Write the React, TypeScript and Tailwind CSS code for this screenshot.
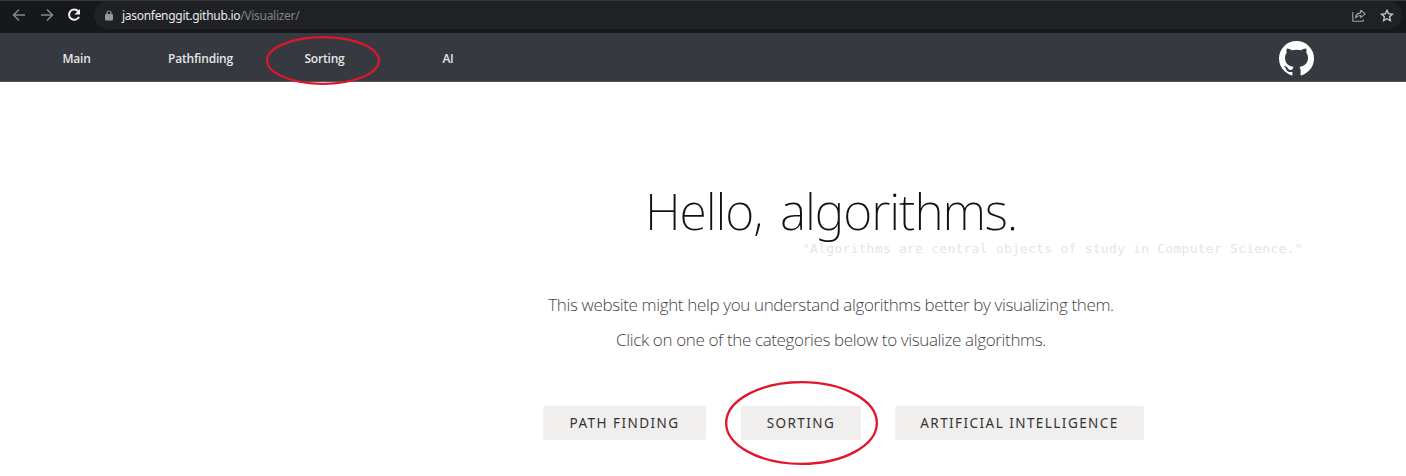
import React from "react";

const noWrap = "whitespace-nowrap";

function BrowserBar() {
  return (
    <div className="flex h-[33px] items-start border-t border-[#34363a] bg-[#16181c] text-[12px]">
      <div className="flex h-[28px] w-[94px] shrink-0 items-center pl-3">
        <svg width="14" height="14" viewBox="0 0 14 14" fill="none" stroke="#85878a" strokeWidth="1.5">
          <path d="M13 7H1.8M7 1.5 1.5 7 7 12.5" />
        </svg>
        <svg className="ml-[14px]" width="14" height="14" viewBox="0 0 14 14" fill="none" stroke="#85878a" strokeWidth="1.5">
          <path d="M1 7h11.2M7 1.5 12.5 7 7 12.5" />
        </svg>
        <svg className="ml-[13px]" width="14" height="14" viewBox="0 0 14 14">
          <path d="M11.3 3.3A5.2 5.2 0 1 0 12 8.8" fill="none" stroke="#f1f1f1" strokeWidth="2" />
          <path d="M13 1v5.6H7.4z" fill="#f1f1f1" />
        </svg>
      </div>
      <div className="mr-1 flex h-[28px] flex-1 items-center rounded-full bg-[#202124] pl-[11px] pr-[8px]">
        <svg width="8" height="11" viewBox="0 0 8 11">
          <path d="M2 5V3a2 2 0 0 1 4 0v2" fill="none" stroke="#94979b" strokeWidth="1.2" />
          <rect x="0" y="4" width="8" height="6.6" rx="1" fill="#94979b" />
        </svg>
        <span className={`ml-[9px] flex-1 pt-px font-['Noto_Sans',sans-serif] text-[12px] tracking-[-0.29px] text-[#808286] ${noWrap}`}>
          <span className="text-[#e8eaed]">jasonfenggit.github.io</span>/Visualizer/
        </span>
        <svg width="14" height="13" viewBox="0 0 14 13" fill="none" stroke="#a0a2a5" strokeWidth="1.1">
          <path d="M.8 3v9.2h10.4v-1.8" />
          <path d="M3.5 8.9C3.8 5.7 5.5 4.2 8.7 3.9V1.3L13.2 4.9 8.7 8.6V6.5C6.3 6.4 4.8 7.3 3.5 8.9Z" strokeLinejoin="round" />
        </svg>
        <svg className="ml-[14px]" width="14" height="13" viewBox="0 0 14 13" fill="none" stroke="#c3c5c8" strokeWidth="1.4">
          <path d="m7 1.3 1.6 3.5 3.9.4-2.9 2.6.8 3.8L7 9.7l-3.4 1.9.8-3.8-2.9-2.6 3.9-.4Z" />
        </svg>
      </div>
    </div>
  );
}

function Circled({ className, width, height, stroke }: { className: string; width: number; height: number; stroke: number }) {
  return (
    <svg className={`pointer-events-none absolute z-10 ${className}`} width={width} height={height} viewBox={`0 0 ${width} ${height}`}>
      <ellipse cx={width / 2} cy={height / 2} rx={(width - stroke) / 2} ry={(height - stroke) / 2} fill="none" stroke="#e1152c" strokeWidth={stroke} />
    </svg>
  );
}

function NavBar() {
  return (
    <nav className="flex h-[49px] items-center border-b border-[#54585c] bg-[#363a40] pl-[14px] pr-[92px] pt-[2px] font-['Open_Sans',sans-serif] text-[12px] font-semibold tracking-[-0.2px] text-[#e4e5e6]">
      <a className="w-[125px] pt-px text-center">Main</a>
      <a className="w-[123px] pt-px text-center">Pathfinding</a>
      <a className="relative w-[125px] pt-px text-center">
        Sorting
        <Circled className="left-[4px] top-[-13px]" width={114} height={49} stroke={2.2} />
      </a>
      <a className="w-[122px] pt-px text-center">AI</a>
      <svg className="ml-auto" width="35" height="35" viewBox="0 0 35 35">
        <circle cx="17.5" cy="17.5" r="17.5" fill="#fff" />
        <path
          d="M13.4 35v-4.1c-4.7.9-5.9-1.5-6.5-3.1-.4-.9-1.2-1.8-2.1-2.5 2.8-.7 3.8 1.8 4.6 2.7 1.2 1.3 2.8 1.2 4.1.6.1-1.3.6-2.2 1.2-2.7C9.8 25.3 6 22.7 6 16.6c0-2 .6-3.5 1.8-4.8-.4-1-.6-2.7.1-4.3 1.7-.1 3.4.8 4.8 1.8 3-.8 6.6-.8 9.6 0 1.4-1 3.1-1.9 4.8-1.8.7 1.6.5 3.3.1 4.3 1.2 1.3 1.8 2.8 1.8 4.8 0 6.1-3.8 8.7-8.7 9.3.8.7 1.3 1.9 1.3 3.7V35Z"
          fill="#363a40"
        />
      </svg>
    </nav>
  );
}

const button = "flex h-[34px] items-center justify-center rounded-[2px] bg-[#f0efed] pt-px whitespace-nowrap font-['Noto_Sans',sans-serif] text-[13.5px] tracking-[1.45px] text-[#333]";

export default function App() {
  return (
    <div className="h-[476px] overflow-hidden bg-white">
      <BrowserBar />
      <NavBar />
      <main className="flex flex-col pt-[94px] font-['Open_Sans',sans-serif]">
        <h1 className={`ml-[645px] h-[65px] font-['Noto_Sans',sans-serif] text-[50px] font-extralight leading-[70px] tracking-[-1.08px] text-[#111] [word-spacing:6px] ${noWrap}`}>
          Hello, algorithms.
        </h1>
        <p className={`ml-[802px] h-[16px] font-['DejaVu_Sans_Mono',monospace] text-[13px] leading-4 tracking-[0.25px] text-[#e5e5e5] ${noWrap}`}>
          "Algorithms are central objects of study in Computer Science."
        </p>
        <div className={`ml-[256px] mt-[30px] text-center text-[17px] font-light leading-[35px] tracking-[-0.36px] text-[#444] ${noWrap}`}>
          <p>This website might help you understand algorithms better by visualizing them.</p>
          <p>Click on one of the categories below to visualize algorithms.</p>
        </div>
        <div className="ml-[543px] mt-[49px] flex">
          <a className={`w-[163px] ${button}`}>PATH FINDING</a>
          <a className={`relative ml-[35px] w-[120px] ${button}`}>
            SORTING
            <Circled className="left-[-16px] top-[-25px]" width={153} height={84} stroke={2.3} />
          </a>
          <a className={`ml-[34px] w-[249px] ${button}`}>ARTIFICIAL INTELLIGENCE</a>
        </div>
      </main>
    </div>
  );
}
